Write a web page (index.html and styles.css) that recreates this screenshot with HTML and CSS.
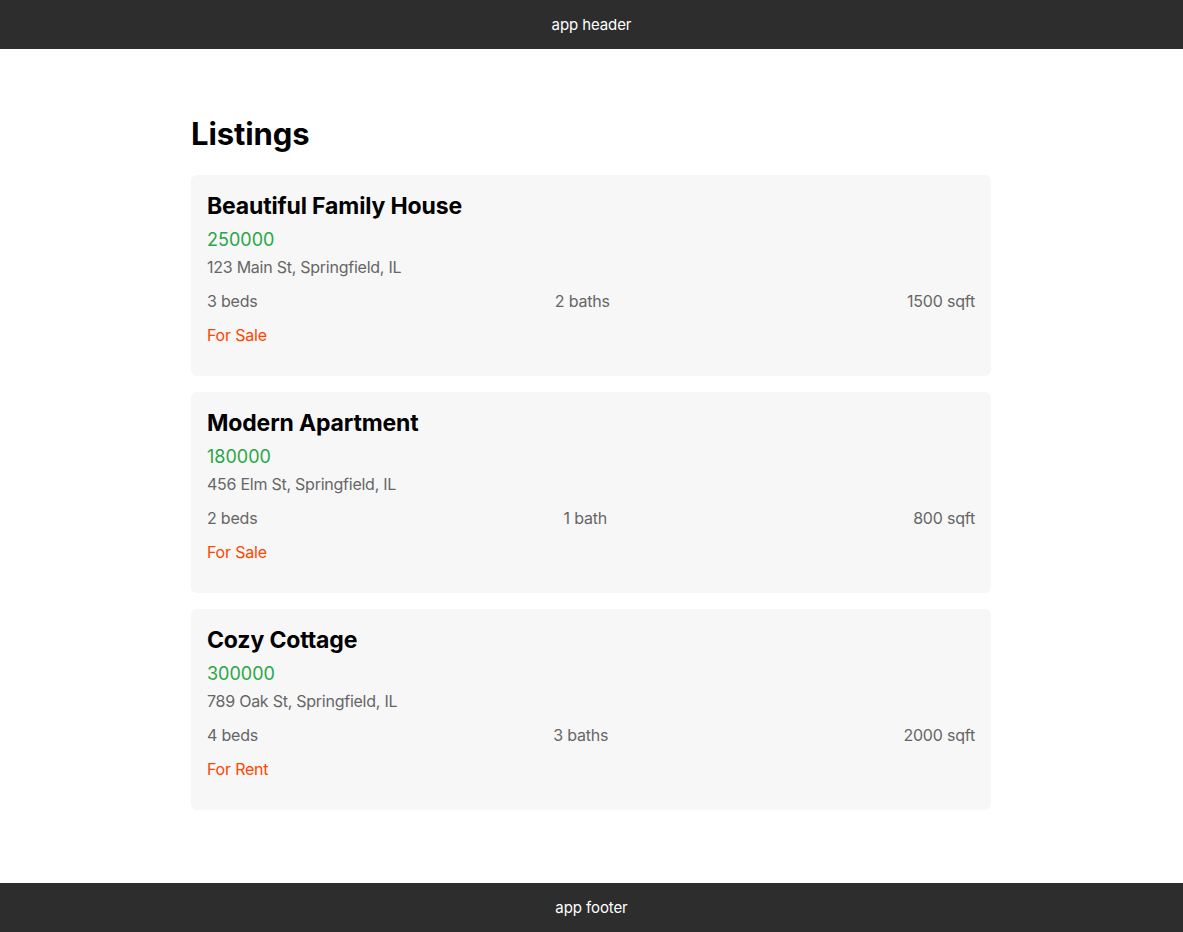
FILE: index.html
```html
<!DOCTYPE html>
<html lang="en">
<head>
<meta charset="utf-8">
<title>Listings</title>
<link rel="stylesheet" href="styles.css">
</head>
<body>
<header class="app-header">app header</header>
<main class="main">
  <div class="container">
    <h1 class="page-title">Listings</h1>
    <div class="listings">
      <article class="card">
        <h2 class="card-title">Beautiful Family House</h2>
        <p class="price">250000</p>
        <p class="address">123 Main St, Springfield, IL</p>
        <div class="features"><span>3 beds</span><span>2 baths</span><span>1500 sqft</span></div>
        <p class="status">For Sale</p>
      </article>
      <article class="card">
        <h2 class="card-title">Modern Apartment</h2>
        <p class="price">180000</p>
        <p class="address">456 Elm St, Springfield, IL</p>
        <div class="features"><span>2 beds</span><span>1 bath</span><span>800 sqft</span></div>
        <p class="status">For Sale</p>
      </article>
      <article class="card">
        <h2 class="card-title">Cozy Cottage</h2>
        <p class="price">300000</p>
        <p class="address">789 Oak St, Springfield, IL</p>
        <div class="features"><span>4 beds</span><span>3 baths</span><span>2000 sqft</span></div>
        <p class="status">For Rent</p>
      </article>
    </div>
  </div>
</main>
<footer class="app-footer">app footer</footer>
</body>
</html>
```

FILE: styles.css
```css
* { box-sizing: border-box; }
html, body { margin: 0; padding: 0; }
body {
  font-family: Inter, "Noto Sans", "Liberation Sans", sans-serif;
  color: #000;
  background: #fff;
  min-height: 100vh;
  display: flex;
  flex-direction: column;
}
.app-header, .app-footer {
  background: #2d2d2d;
  color: #fff;
  height: 49px;
  display: flex;
  align-items: center;
  justify-content: center;
  font-size: 15px;
  letter-spacing: -0.1px;
}
.main {
  flex: 1;
  padding: 65px 0 40px;
}
.container {
  width: 800px;
  margin: 0 auto 0 191px;
}
.page-title {
  margin: 0 0 22px;
  font-size: 31px;
  line-height: 39px;
  font-weight: 700;
  letter-spacing: -0.1px;
}
.listings {
  display: flex;
  flex-direction: column;
  gap: 16px;
}
.card {
  background: #f7f7f7;
  border-radius: 6px;
  padding: 16px;
}
.card-title {
  margin: 0;
  font-size: 23px;
  line-height: 30px;
  font-weight: 700;
  letter-spacing: -0.15px;
}
.price {
  margin: 8px 0 0;
  font-size: 18px;
  line-height: 22px;
  color: #28a745;
}
.address {
  margin: 6px 0 0;
  font-size: 16px;
  line-height: 20px;
  color: #666;
  letter-spacing: -0.25px;
}
.features {
  margin-top: 14px;
  display: flex;
  justify-content: space-between;
  font-size: 16px;
  line-height: 20px;
  color: #666;
  letter-spacing: -0.2px;
}
.status {
  margin: 14px 0 15px;
  font-size: 16px;
  line-height: 20px;
  color: #ff4500;
  letter-spacing: -0.2px;
}
```
